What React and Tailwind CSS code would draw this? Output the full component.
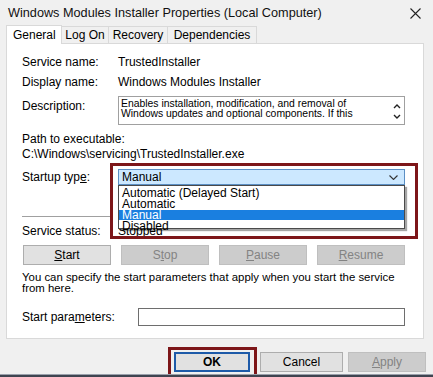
const font = { fontFamily: '"Liberation Sans", Arial, sans-serif' };

const Btn = ({ children, disabled, className = '' }) => (
  <div
    className={
      'h-[20px] flex items-center justify-center border text-[12px] leading-none ' +
      (disabled
        ? 'bg-[#cccccc] border-[#bfbfbf] text-[#838383] '
        : 'bg-[#e1e1e1] border-[#adadad] text-black ') +
      className
    }
  >
    {children}
  </div>
);

const Row = ({ label, value, className = '' }) => (
  <div className={'flex h-[14px] items-center ' + className}>
    <div className="w-[96px]">{label}</div>
    <div>{value}</div>
  </div>
);

export default function App() {
  return (
    <div
      className="w-[433px] h-[377px] bg-[#f0f0f0] relative overflow-hidden text-[12px] leading-[14px] text-black"
      style={font}
    >
      {/* title bar */}
      <div className="h-[26px] flex items-center justify-between pl-[8px] pr-[10px]">
        <span className="text-[12.7px] text-[#111]">Windows Modules Installer Properties (Local Computer)</span>
        <svg width="11" height="11" viewBox="0 0 11 11" className="mr-[2px]">
          <path d="M0.5 0.5 L10.5 10.5 M10.5 0.5 L0.5 10.5" stroke="#222" strokeWidth="1.1" />
        </svg>
      </div>

      <div className="pl-[6px]">
        {/* tabs */}
        <div className="flex items-end h-[17px]">
          <div className="h-[19px] -mb-px z-10 w-[56px] bg-white border border-b-0 border-[#d9d9d9] flex items-center pl-[6px]">
            General
          </div>
          <div className="h-[17px] w-[47px] border border-l-0 border-b-0 border-[#d9d9d9] flex items-center justify-center">Log On</div>
          <div className="h-[17px] w-[59px] border border-l-0 border-b-0 border-[#d9d9d9] flex items-center justify-center">Recovery</div>
          <div className="h-[17px] w-[89px] border border-l-0 border-b-0 border-[#d9d9d9] flex items-center justify-center">Dependencies</div>
        </div>

        {/* panel */}
        <div className="relative w-[418px] h-[296px] bg-white border border-[#d9d9d9] pl-[15px] pr-[18px] pt-[11px]">
          <Row label="Service name:" value="TrustedInstaller" />
          <Row label="Display name:" value="Windows Modules Installer" className="mt-[6px]" />

          <div className="flex mt-[7px]">
            <div className="w-[96px] pt-[3px]">Description:</div>
            <div className="flex-1 h-[29px] border border-[#a0a0a0] flex pl-[2px] pt-[2px] text-[10.4px] leading-[10px]">
              <div className="flex-1 pr-[20px]">
                Enables installation, modification, and removal of Windows updates and optional components. If this
              </div>
              <div className="w-[14px] flex flex-col items-center justify-center gap-[5px]">
                <svg width="8" height="5" viewBox="0 0 8 5"><path d="M1 4 L4 1 L7 4" stroke="#222" strokeWidth="1.4" fill="none" /></svg>
                <svg width="8" height="5" viewBox="0 0 8 5"><path d="M1 1 L4 4 L7 1" stroke="#222" strokeWidth="1.4" fill="none" /></svg>
              </div>
            </div>
          </div>

          <div className="mt-[7px] h-[14px]">Path to executable:</div>
          <div className="mt-px h-[14px]">C:\Windows\servicing\TrustedInstaller.exe</div>

          <div className="flex items-center mt-[8px]">
            <div className="w-[96px]">
              Startup typ<span className="underline">e</span>:
            </div>
            <div className="relative flex-1">
              <div className="h-[16px] bg-[#cce8ff] border border-[#5b8fc4] flex items-center justify-between pl-[3px] pr-[6px]">
                <span>Manual</span>
                <svg width="9" height="5" viewBox="0 0 9 5"><path d="M0.5 0.5 L4.5 4.5 L8.5 0.5" stroke="#333" strokeWidth="1.1" fill="none" /></svg>
              </div>
              {/* dropdown list */}
              <div className="absolute z-20 left-0 top-[16px] w-full h-[44px] bg-white border border-[#4a4a4a] shadow-[2px_2px_1px_rgba(0,0,0,0.35)] pt-[2px] leading-[10px] text-[12px]">
                <div className="h-[10px] pl-[3px]">Automatic (Delayed Start)</div>
                <div className="h-[10px] pl-[3px] mt-px">Automatic</div>
                <div className="h-[10px] pl-[3px] mt-px bg-[#1a7fe0] text-white">Manual</div>
                <div className="h-[10px] pl-[3px] mt-px">Disabled</div>
              </div>
            </div>
          </div>

          <div className="mt-[31px] h-px w-[89px] bg-[#a0a0a0]" />

          <Row label="Service status:" value="Stopped" className="mt-[7px]" />

          <div className="grid grid-cols-4 gap-x-[10px] mt-[7px] pl-px">
            <Btn><span className="underline">S</span>tart</Btn>
            <Btn disabled>S<span className="underline">t</span>op</Btn>
            <Btn disabled><span className="underline">P</span>ause</Btn>
            <Btn disabled><span className="underline">R</span>esume</Btn>
          </div>

          <div className="mt-[7px] leading-[11px] text-[11.4px]">
            You can specify the start parameters that apply when you start the service from here.
          </div>

          <div className="flex items-center mt-[14px]">
            <div className="w-[116px]">
              Start para<span className="underline">m</span>eters:
            </div>
            <div className="flex-1 h-[18px] border border-[#6e6e6e] bg-white" />
          </div>

          {/* red annotation */}
          <div className="absolute left-[103px] top-[119px] w-[308px] h-[76px] border-[3px] border-[#7d1619] pointer-events-none" />
        </div>
      </div>

      {/* bottom buttons */}
      <div className="flex items-center mt-[13px] pl-[174px] gap-x-[10px]">
        <div className="relative">
          <div className="absolute -left-[6px] -top-[5px] w-[89px] h-[32px] border-[3px] border-[#7d1619]" />
          <div className="w-[76px] h-[20px] bg-[#e1e1e1] border-2 border-[#1d5aa8] flex items-center justify-center text-[12px] font-bold">OK</div>
        </div>
        <Btn className="w-[83px]">Cancel</Btn>
        <Btn disabled className="w-[78px] -ml-[5px]"><span className="underline">A</span>pply</Btn>
      </div>

      <div className="absolute left-0 bottom-0 w-full h-[3px] border-t border-[#9aa0ab] bg-[#3f4450]" />
    </div>
  );
}
